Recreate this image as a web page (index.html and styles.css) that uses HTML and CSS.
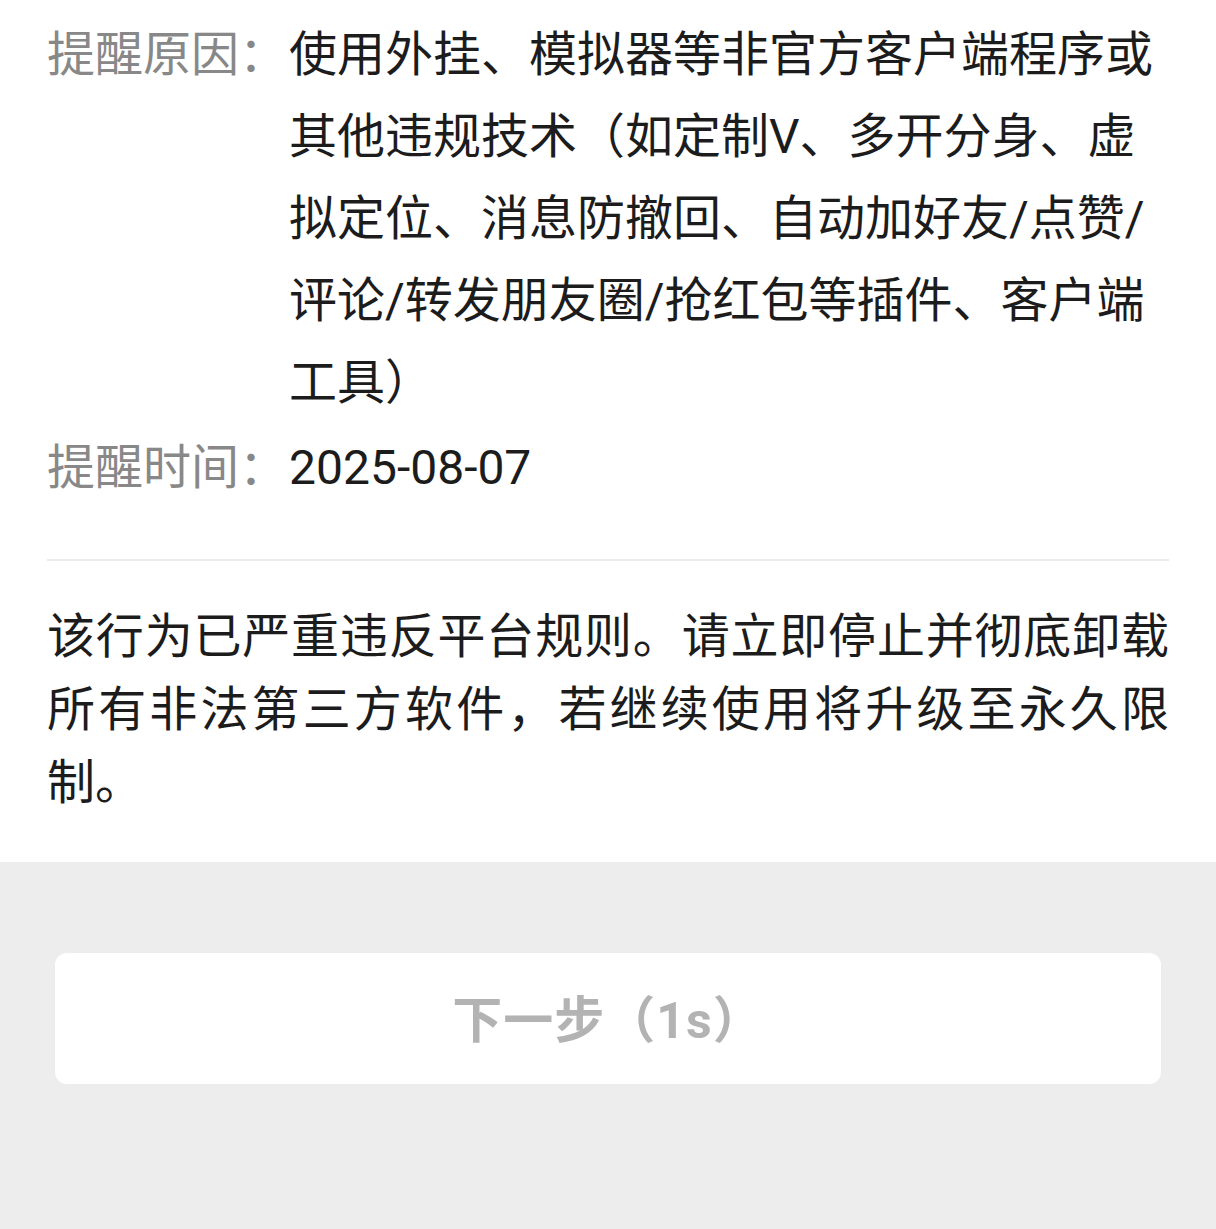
FILE: index.html
```html
<!DOCTYPE html>
<html lang="zh-CN">
<head>
<meta charset="utf-8">
<title>提醒</title>
<link rel="stylesheet" href="styles.css">
</head>
<body>
<div class="page">
  <section class="card">
    <div class="info">
      <div class="row">
        <div class="label">提醒原因：</div>
        <div class="value">使用外挂、模拟器等非官方客户端程序或其他违规技术（如定制V、多开分身、虚拟定位、消息防撤回、自动加好友/点赞/评论/转发朋友圈/抢红包等插件、客户端工具）</div>
      </div>
      <div class="row">
        <div class="label">提醒时间：</div>
        <div class="value">2025-08-07</div>
      </div>
    </div>
    <div class="divider"></div>
    <p class="notice">该行为已严重违反平台规则。请立即停止并彻底卸载所有非法第三方软件，若继续使用将升级至永久限制。</p>
  </section>
  <section class="footer">
    <button class="next-btn" type="button">下一步（1s）</button>
  </section>
</div>
</body>
</html>
```

FILE: styles.css
```css
html, body {
  margin: 0;
  padding: 0;
  background: #ededed;
}
body {
  font-family: Roboto, "Noto Sans CJK SC", sans-serif;
  color: #1a1a1a;
}
.page {
  min-height: 100vh;
  display: flex;
  flex-direction: column;
}
.card {
  background: #ffffff;
  padding: 14px 47px 43px;
}
.info {
  display: flex;
  flex-direction: column;
  gap: 3px;
}
.row {
  display: grid;
  grid-template-columns: 242px 1fr;
  font-size: 48px;
  line-height: 82px;
}
.label {
  color: #888888;
  white-space: nowrap;
}
.value {
  color: #1c1c1c;
}
.divider {
  height: 2px;
  background: #ececec;
  margin-top: 50px;
}
.notice {
  margin: 39px 0 0;
  font-size: 48px;
  line-height: 73px;
  text-align: justify;
  color: #1c1c1c;
}
.footer {
  flex: 1;
  background: #ededed;
  padding: 91px 55px 0;
}
.next-btn {
  display: block;
  width: 100%;
  height: 131px;
  border: none;
  border-radius: 12px;
  background: #ffffff;
  color: #b3b3b3;
  font-family: Roboto, "Noto Sans CJK SC", sans-serif;
  font-size: 50px;
  font-weight: 700;
  letter-spacing: 1px;
  padding: 0 0 6px;
}
```
